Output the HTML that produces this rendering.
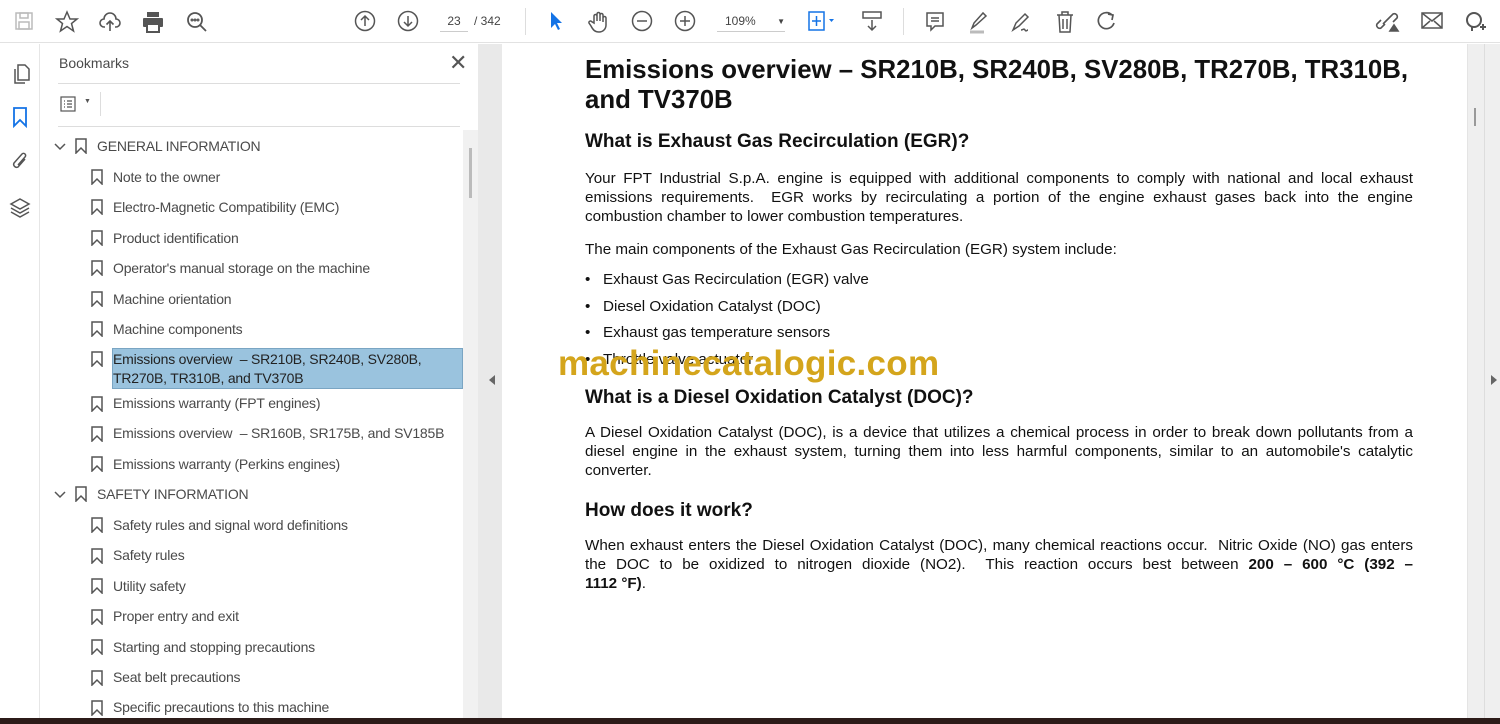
<!DOCTYPE html>
<html><head><style>
*{margin:0;padding:0;box-sizing:border-box}
body{width:1500px;height:724px;overflow:hidden;background:#fff;font-family:"Liberation Sans",sans-serif;position:relative}
.tb{position:absolute;left:0;top:0;width:1500px;height:43px;background:#fff;border-bottom:1px solid #e2e2e2}
.ic{position:absolute;top:10px}
.rail{position:absolute;left:0;top:44px;width:40px;height:674px;background:#fff;border-right:1px solid #e6e6e6}
.panel{position:absolute;left:41px;top:44px;width:437px;height:674px;background:#fff}
.gut{position:absolute;left:478px;top:44px;width:24px;height:674px;background:#e9e9e9}
.page{position:absolute;left:502px;top:44px;width:965px;height:674px;background:#fff}
.rs{position:absolute;left:1467px;top:44px;width:33px;height:674px;background:#efefef;border-left:1px solid #e4e4e4}
.bot{position:absolute;left:0;top:718px;width:1500px;height:6px;background:#2c1b19}
.bm{position:absolute;left:113px;font-size:14px;color:#4a4a4a;line-height:19px;letter-spacing:-0.2px}
.bmi{position:absolute;left:91px;width:12px;height:16px}
.h{position:absolute;left:585px;color:#111;font-weight:bold}
.p{position:absolute;left:585px;width:828px;font-size:15.2px;color:#111;line-height:19px;text-align:justify}
</style></head><body>
<div class="tb">
<svg class="ic" style="left:13px" width="22" height="22" viewBox="0 0 22 22" fill="none" stroke="#bbb" stroke-width="1.5"><rect x="3" y="3" width="16" height="16"/><rect x="7" y="3" width="8" height="5"/><rect x="6" y="12" width="10" height="7"/></svg>
<svg class="ic" style="left:55px" width="24" height="24" viewBox="0 0 24 24" fill="none" stroke="#555" stroke-width="1.5"><path d="M12 2l3 7h7l-5.5 4.5 2 7.5L12 16.5 5.5 21l2-7.5L2 9h7z"/></svg>
<svg class="ic" style="left:98px" width="24" height="24" viewBox="0 0 24 24" fill="none" stroke="#555" stroke-width="1.6"><path d="M7 17H6a4 4 0 010-8 6 6 0 0112 0 4 4 0 010 8h-1M12 21V11M8.5 14.5L12 11l3.5 3.5"/></svg>
<svg class="ic" style="left:141px" width="24" height="24" viewBox="0 0 24 24" fill="#555"><rect x="6" y="2" width="12" height="5"/><rect x="2" y="8" width="20" height="9" rx="1"/><rect x="6" y="14" width="12" height="8" fill="#fff" stroke="#555" stroke-width="2"/></svg>
<svg class="ic" style="left:185px" width="24" height="24" viewBox="0 0 24 24" fill="none" stroke="#555" stroke-width="1.8"><circle cx="10" cy="10" r="7"/><path d="M15 15l6 6"/><circle cx="7" cy="10" r=".6"/><circle cx="10" cy="10" r=".6"/><circle cx="13" cy="10" r=".6"/></svg>
<svg class="ic" style="left:354px" width="22" height="22" viewBox="0 0 22 22" fill="none" stroke="#555" stroke-width="1.5"><circle cx="11" cy="11" r="9.5"/><path d="M11 16V6M7 10l4-4 4 4"/></svg>
<svg class="ic" style="left:397px" width="22" height="22" viewBox="0 0 22 22" fill="none" stroke="#555" stroke-width="1.5"><circle cx="11" cy="11" r="9.5"/><path d="M11 6v10M7 12l4 4 4-4"/></svg>
<div style="position:absolute;left:440px;top:14px;width:28px;font-size:12px;color:#444;text-align:center;border-bottom:1px solid #ccc;padding-bottom:3px">23</div>
<div style="position:absolute;left:474px;top:14px;font-size:12px;color:#444">/ 342</div>
<div style="position:absolute;left:525px;top:8px;width:1px;height:27px;background:#ddd"></div>
<svg class="ic" style="left:548px" width="16" height="22" viewBox="0 0 16 22"><path d="M3 2v16l4-4 3 6 2-1-3-6h5z" fill="#1473e6"/></svg>
<svg class="ic" style="left:587px" width="24" height="24" viewBox="0 0 24 24" fill="none" stroke="#555" stroke-width="1.5"><path d="M7 13V6a1.5 1.5 0 013 0v5V4a1.5 1.5 0 013 0v7V5a1.5 1.5 0 013 0v7V8a1.5 1.5 0 013 0v7c0 4-3 7-7 7s-6-2-8-6l-2-3a1.5 1.5 0 012.5-1.5z"/></svg>
<svg class="ic" style="left:631px" width="22" height="22" viewBox="0 0 22 22" fill="none" stroke="#555" stroke-width="1.5"><circle cx="11" cy="11" r="9.5"/><path d="M6 11h10"/></svg>
<svg class="ic" style="left:674px" width="22" height="22" viewBox="0 0 22 22" fill="none" stroke="#555" stroke-width="1.5"><circle cx="11" cy="11" r="9.5"/><path d="M6 11h10M11 6v10"/></svg>
<div style="position:absolute;left:717px;top:14px;width:68px;font-size:12px;color:#444;border-bottom:1px solid #ccc;padding:0 0 3px 8px">109% <span style="float:right;font-size:8px;margin-top:3px">▼</span></div>
<svg class="ic" style="left:807px" width="30" height="22" viewBox="0 0 30 22" fill="none" stroke="#1473e6" stroke-width="1.5"><rect x="2" y="2" width="15" height="18"/><path d="M9.5 6v10M5 11h9"/><path d="M22 9l2.5 3 2.5-3z" fill="#1473e6" stroke="none"/></svg>
<svg class="ic" style="left:861px" width="22" height="24" viewBox="0 0 22 24" fill="none" stroke="#555" stroke-width="1.5"><rect x="2" y="2" width="18" height="6"/><path d="M11 10v10M7 16l4 4 4-4"/></svg>
<div style="position:absolute;left:903px;top:8px;width:1px;height:27px;background:#ddd"></div>
<svg class="ic" style="left:924px" width="22" height="24" viewBox="0 0 22 24" fill="none" stroke="#555" stroke-width="1.5"><path d="M3 3h16v13h-8l-4 4v-4H3z"/><path d="M7 8h8M7 11h8"/></svg>
<svg class="ic" style="left:966px" width="24" height="24" viewBox="0 0 24 24" fill="none" stroke="#555" stroke-width="1.5"><path d="M6 18l2-5 9-10 3 3-10 9z"/><path d="M4 22h14" stroke="#bbb" stroke-width="3"/></svg>
<svg class="ic" style="left:1009px" width="24" height="24" viewBox="0 0 24 24" fill="none" stroke="#555" stroke-width="1.5"><path d="M4 20l3-7 9-9 3 3-9 9zM12 20c2 0 3-2 4 0s2 0 3 0"/></svg>
<svg class="ic" style="left:1054px" width="22" height="24" viewBox="0 0 22 24" fill="none" stroke="#555" stroke-width="1.5"><path d="M3 5h16M8 5V2h6v3M5 5l1 17h10l1-17M9 9v10M13 9v10"/></svg>
<svg class="ic" style="left:1096px" width="22" height="22" viewBox="0 0 22 22" fill="none" stroke="#555" stroke-width="1.7"><path d="M16 5a8 8 0 10 2 8"/><path d="M12 4l5 1-1 5"/></svg>
<svg class="ic" style="left:1375px" width="26" height="24" viewBox="0 0 26 24" fill="none" stroke="#555" stroke-width="1.6"><path d="M10 14l-4 4a3 3 0 01-4-4l4-4M14 8l4-4a3 3 0 014 4l-4 4M8 14l6-6"/><path d="M15 21l4-6 4 6z" fill="#555"/></svg>
<svg class="ic" style="left:1420px" width="24" height="22" viewBox="0 0 24 22" fill="none" stroke="#555" stroke-width="1.5"><rect x="2" y="3" width="20" height="15"/><path d="M2 3l10 8 10-8M2 18l8-7M22 18l-8-7"/></svg>
<svg class="ic" style="left:1463px" width="24" height="24" viewBox="0 0 24 24" fill="none" stroke="#555" stroke-width="2"><circle cx="11" cy="10" r="7"/><path d="M9 16l0 5M17 17h6M20 14v6"/></svg>
</div>

<div class="rail">
<svg style="position:absolute;left:10px;top:18px" width="22" height="24" viewBox="0 0 22 24" fill="none" stroke="#555" stroke-width="1.5"><path d="M8 3h7l4 4v11H8z"/><path d="M5 7v14h10"/></svg>
<svg style="position:absolute;left:12px;top:62px" width="16" height="22" viewBox="0 0 16 22" fill="none" stroke="#1473e6" stroke-width="1.8"><path d="M2 2h12v18l-6-6-6 6z"/></svg>
<svg style="position:absolute;left:9px;top:106px" width="22" height="24" viewBox="0 0 22 24" fill="none" stroke="#555" stroke-width="1.5"><path d="M16 9l-7 8a3 3 0 01-4-4l8-9a2 2 0 013 3l-7 8"/></svg>
<svg style="position:absolute;left:9px;top:152px" width="22" height="24" viewBox="0 0 22 24" fill="none" stroke="#555" stroke-width="1.5"><path d="M11 3l9 5-9 5-9-5z"/><path d="M2 12l9 5 9-5M2 16l9 5 9-5"/></svg>
</div>

<div class="panel">
<div style="position:absolute;left:18px;top:11px;font-size:14px;color:#4a4a4a">Bookmarks</div>
<div style="position:absolute;left:408px;top:6px;font-size:22px;color:#555">✕</div>
<div style="position:absolute;left:17px;top:39px;width:402px;height:1px;background:#ddd"></div>
<svg style="position:absolute;left:19px;top:52px" width="16" height="16" viewBox="0 0 16 16" fill="none" stroke="#555" stroke-width="1.2"><rect x="1" y="1" width="14" height="14"/><path d="M4 5h1M7 5h5M4 8h1M7 8h5M4 11h1M7 11h5"/></svg>
<div style="position:absolute;left:43px;top:54px;font-size:7px;color:#555">▼</div>
<div style="position:absolute;left:59px;top:48px;width:1px;height:24px;background:#ddd"></div>
<div style="position:absolute;left:17px;top:82px;width:402px;height:1px;background:#ddd"></div>
<div style="position:absolute;left:422px;top:86px;width:15px;height:588px;background:#f1f1f1"></div>
<div style="position:absolute;left:428px;top:104px;width:3px;height:50px;background:#bbb"></div>
</div>
<div style="position:absolute;left:112px;top:348px;width:351px;height:41px;background:#9ac3de;border:1px solid #7aa5c3"></div>

<svg style="position:absolute;left:53px;top:140px" width="14" height="14" viewBox="0 0 14 14" fill="none" stroke="#555" stroke-width="1.5"><path d="M2 4l5 5 5-5"/></svg>
<svg class="bmi" style="left:75px;top:138px" viewBox="0 0 12 16" fill="none" stroke="#555" stroke-width="1.5"><path d="M1 1h10v14l-5-5-5 5z"/></svg>
<div class="bm" style="left:97px;top:137px">GENERAL INFORMATION</div>
<svg style="position:absolute;left:53px;top:488px" width="14" height="14" viewBox="0 0 14 14" fill="none" stroke="#555" stroke-width="1.5"><path d="M2 4l5 5 5-5"/></svg>
<svg class="bmi" style="left:75px;top:486px" viewBox="0 0 12 16" fill="none" stroke="#555" stroke-width="1.5"><path d="M1 1h10v14l-5-5-5 5z"/></svg>
<div class="bm" style="left:97px;top:485px">SAFETY INFORMATION</div>

<svg class="bmi" style="top:169px" viewBox="0 0 12 16" fill="none" stroke="#555" stroke-width="1.5"><path d="M1 1h10v14l-5-5-5 5z"/></svg><div class="bm" style="top:168px">Note to the owner</div>
<svg class="bmi" style="top:199px" viewBox="0 0 12 16" fill="none" stroke="#555" stroke-width="1.5"><path d="M1 1h10v14l-5-5-5 5z"/></svg><div class="bm" style="top:198px">Electro-Magnetic Compatibility (EMC)</div>
<svg class="bmi" style="top:230px" viewBox="0 0 12 16" fill="none" stroke="#555" stroke-width="1.5"><path d="M1 1h10v14l-5-5-5 5z"/></svg><div class="bm" style="top:229px">Product identification</div>
<svg class="bmi" style="top:260px" viewBox="0 0 12 16" fill="none" stroke="#555" stroke-width="1.5"><path d="M1 1h10v14l-5-5-5 5z"/></svg><div class="bm" style="top:259px">Operator's manual storage on the machine</div>
<svg class="bmi" style="top:291px" viewBox="0 0 12 16" fill="none" stroke="#555" stroke-width="1.5"><path d="M1 1h10v14l-5-5-5 5z"/></svg><div class="bm" style="top:290px">Machine orientation</div>
<svg class="bmi" style="top:321px" viewBox="0 0 12 16" fill="none" stroke="#555" stroke-width="1.5"><path d="M1 1h10v14l-5-5-5 5z"/></svg><div class="bm" style="top:320px">Machine components</div>
<svg class="bmi" style="top:351px" viewBox="0 0 12 16" fill="none" stroke="#555" stroke-width="1.5"><path d="M1 1h10v14l-5-5-5 5z"/></svg><div class="bm" style="top:350px;color:#222">Emissions overview &nbsp;– SR210B, SR240B, SV280B,<br>TR270B, TR310B, and TV370B</div>
<svg class="bmi" style="top:396px" viewBox="0 0 12 16" fill="none" stroke="#555" stroke-width="1.5"><path d="M1 1h10v14l-5-5-5 5z"/></svg><div class="bm" style="top:394px">Emissions warranty (FPT engines)</div>
<svg class="bmi" style="top:426px" viewBox="0 0 12 16" fill="none" stroke="#555" stroke-width="1.5"><path d="M1 1h10v14l-5-5-5 5z"/></svg><div class="bm" style="top:424px">Emissions overview &nbsp;– SR160B, SR175B, and SV185B</div>
<svg class="bmi" style="top:456px" viewBox="0 0 12 16" fill="none" stroke="#555" stroke-width="1.5"><path d="M1 1h10v14l-5-5-5 5z"/></svg><div class="bm" style="top:455px">Emissions warranty (Perkins engines)</div>
<svg class="bmi" style="top:517px" viewBox="0 0 12 16" fill="none" stroke="#555" stroke-width="1.5"><path d="M1 1h10v14l-5-5-5 5z"/></svg><div class="bm" style="top:516px">Safety rules and signal word definitions</div>
<svg class="bmi" style="top:548px" viewBox="0 0 12 16" fill="none" stroke="#555" stroke-width="1.5"><path d="M1 1h10v14l-5-5-5 5z"/></svg><div class="bm" style="top:546px">Safety rules</div>
<svg class="bmi" style="top:578px" viewBox="0 0 12 16" fill="none" stroke="#555" stroke-width="1.5"><path d="M1 1h10v14l-5-5-5 5z"/></svg><div class="bm" style="top:577px">Utility safety</div>
<svg class="bmi" style="top:609px" viewBox="0 0 12 16" fill="none" stroke="#555" stroke-width="1.5"><path d="M1 1h10v14l-5-5-5 5z"/></svg><div class="bm" style="top:607px">Proper entry and exit</div>
<svg class="bmi" style="top:639px" viewBox="0 0 12 16" fill="none" stroke="#555" stroke-width="1.5"><path d="M1 1h10v14l-5-5-5 5z"/></svg><div class="bm" style="top:638px">Starting and stopping precautions</div>
<svg class="bmi" style="top:670px" viewBox="0 0 12 16" fill="none" stroke="#555" stroke-width="1.5"><path d="M1 1h10v14l-5-5-5 5z"/></svg><div class="bm" style="top:668px">Seat belt precautions</div>
<svg class="bmi" style="top:700px" viewBox="0 0 12 16" fill="none" stroke="#555" stroke-width="1.5"><path d="M1 1h10v14l-5-5-5 5z"/></svg><div class="bm" style="top:698px">Specific precautions to this machine</div>

<div class="gut"><div style="position:absolute;left:11px;top:331px;width:0;height:0;border-top:5px solid transparent;border-bottom:5px solid transparent;border-right:6px solid #666"></div></div>
<div class="page"></div>
<div class="rs"><div style="position:absolute;left:6px;top:64px;width:2px;height:18px;background:#999"></div><div style="position:absolute;left:16px;top:0;width:1px;height:674px;background:#ddd"></div><div style="position:absolute;left:23px;top:331px;width:0;height:0;border-top:5px solid transparent;border-bottom:5px solid transparent;border-left:6px solid #666"></div></div>
<div class="bot"></div>

<div class="h" style="top:55px;font-size:25.8px;line-height:30px;width:850px">Emissions overview – SR210B, SR240B, SV280B, TR270B, TR310B,<br>and TV370B</div>
<div class="h" style="top:131px;font-size:19px">What is Exhaust Gas Recirculation (EGR)?</div>
<div class="p" style="top:169px">Your FPT Industrial S.p.A. engine is equipped with additional components to comply with national and local exhaust emissions requirements. &nbsp;EGR works by recirculating a portion of the engine exhaust gases back into the engine combustion chamber to lower combustion temperatures.</div>
<div class="p" style="top:240px">The main components of the Exhaust Gas Recirculation (EGR) system include:</div>
<div class="p" style="top:267px;line-height:26.5px">• &nbsp;&nbsp;Exhaust Gas Recirculation (EGR) valve<br>• &nbsp;&nbsp;Diesel Oxidation Catalyst (DOC)<br>• &nbsp;&nbsp;Exhaust gas temperature sensors<br>• &nbsp;&nbsp;Throttle valve actuator</div>
<div style="position:absolute;left:558px;top:344px;font-size:35px;font-weight:bold;color:#d4a51c;letter-spacing:.3px">machinecatalogic.com</div>
<div class="h" style="top:387px;font-size:19px">What is a Diesel Oxidation Catalyst (DOC)?</div>
<div class="p" style="top:423px">A Diesel Oxidation Catalyst (DOC), is a device that utilizes a chemical process in order to break down pollutants from a diesel engine in the exhaust system, turning them into less harmful components, similar to an automobile's catalytic converter.</div>
<div class="h" style="top:500px;font-size:19px">How does it work?</div>
<div class="p" style="top:536px;text-align-last:justify">When exhaust enters the Diesel Oxidation Catalyst (DOC), many chemical reactions occur. &nbsp;Nitric Oxide (NO) gas enters the DOC to be oxidized to nitrogen dioxide (NO2). &nbsp;This reaction occurs best between <b>200 – 600 °C (392 –</b></div>
<div class="p" style="top:574px"><b>1112 °F)</b>.</div>
</body></html>
